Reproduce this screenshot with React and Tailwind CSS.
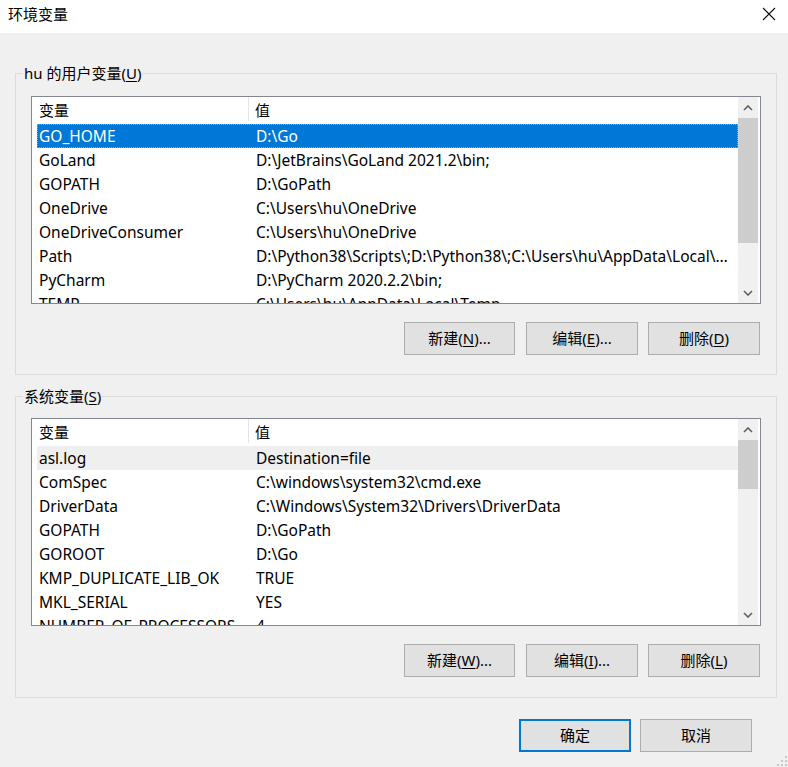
import React from 'react';

const font = { fontFamily: '"Segoe UI", "Noto Sans", "Noto Sans CJK SC", sans-serif' };

const userVars = [
  ['GO_HOME', 'D:\\Go'],
  ['GoLand', 'D:\\JetBrains\\GoLand 2021.2\\bin;'],
  ['GOPATH', 'D:\\GoPath'],
  ['OneDrive', 'C:\\Users\\hu\\OneDrive'],
  ['OneDriveConsumer', 'C:\\Users\\hu\\OneDrive'],
  ['Path', 'D:\\Python38\\Scripts\\;D:\\Python38\\;C:\\Users\\hu\\AppData\\Local\\Programs\\Microsoft VS Code\\bin'],
  ['PyCharm', 'D:\\PyCharm 2020.2.2\\bin;'],
  ['TEMP', 'C:\\Users\\hu\\AppData\\Local\\Temp'],
];

const sysVars = [
  ['asl.log', 'Destination=file'],
  ['ComSpec', 'C:\\windows\\system32\\cmd.exe'],
  ['DriverData', 'C:\\Windows\\System32\\Drivers\\DriverData'],
  ['GOPATH', 'D:\\GoPath'],
  ['GOROOT', 'D:\\Go'],
  ['KMP_DUPLICATE_LIB_OK', 'TRUE'],
  ['MKL_SERIAL', 'YES'],
  ['NUMBER_OF_PROCESSORS', '4'],
];

const Chevron = ({ down }) => (
  <svg width="10" height="6" viewBox="0 0 10 6" className="block">
    <polyline
      points={down ? '1,1 5,5 9,1' : '1,5 5,1 9,5'}
      fill="none"
      stroke="#606060"
      strokeWidth="1.6"
    />
  </svg>
);

const VarList = ({ rows, selected, hovered, thumbTop, thumbHeight }) => (
  <div className="ml-[15px] w-[730px] h-[208px] border border-[#828790] bg-white flex overflow-hidden">
    <div className="flex-1 min-w-0 flex flex-col pl-[5px] overflow-hidden">
      {/* 列见出し */}
      <div className="h-[27px] shrink-0 flex text-[15px] text-black">
        <div className="w-[212px] pl-[2px] pt-[3px] flex items-center border-r border-[#e5e5e5] h-[24px]">变量</div>
        <div className="flex-1 pl-[6px] pt-[3px] flex items-center h-[24px]">值</div>
      </div>
      {rows.map(([name, value], i) => {
        const isSel = i === selected;
        const isHover = i === hovered;
        return (
          <div
            key={name}
            className={`h-[24px] shrink-0 flex items-center pt-[1px] text-[15.5px] ${
              isSel
                ? 'bg-[#0078d7] text-white outline outline-1 outline-dotted outline-[#ff8a2a] -outline-offset-1'
                : isHover
                ? 'bg-[#efefef] text-black'
                : 'text-black'
            }`}
          >
            <div className="w-[212px] pl-[2px] truncate">{name}</div>
            <div className="flex-1 min-w-0 pl-[7px] pr-[6px] truncate">{value}</div>
          </div>
        );
      })}
    </div>
    {/* スクロールバー */}
    <div className="w-[20px] mr-[2px] shrink-0 bg-[#f0f0f0] flex flex-col">
      <div className="h-[21px] shrink-0 flex items-center justify-center">
        <Chevron />
      </div>
      <div className="flex-1 relative">
        <div
          className="absolute left-0 right-0 bg-[#cdcdcd]"
          style={{ top: thumbTop, height: thumbHeight }}
        />
      </div>
      <div className="h-[21px] shrink-0 flex items-center justify-center">
        <Chevron down />
      </div>
    </div>
  </div>
);

const Btn = ({ children, primary, className = '' }) => (
  <button
    className={`w-[111px] h-[33px] bg-[#e1e1e1] text-[15px] text-black flex items-center justify-center ${
      primary ? 'border-2 border-[#0078d7]' : 'border border-[#adadad]'
    } ${className}`}
  >
    {children}
  </button>
);

const U = ({ children }) => <span className="underline underline-offset-2">{children}</span>;

const Group = ({ label, children, className = '' }) => (
  <fieldset className={`ml-[15px] w-[762px] border border-[#dcdcdc] ${className}`}>
    <legend className="ml-[7px] px-[1px] text-[15px] leading-[20px] text-black">{label}</legend>
    {children}
  </fieldset>
);

export default function App() {
  return (
    <div className="w-[788px] h-[767px] bg-[#f0f0f0] flex flex-col relative overflow-hidden" style={font}>
      {/* タイトルバー */}
      <div className="h-[33px] bg-white flex items-center justify-between pl-[8px] pr-[12px]">
        <span className="text-[15px] text-black -mt-[4px]">环境变量</span>
        <svg width="14" height="14" viewBox="0 0 14 14" className="-mt-[5px]">
          <path d="M1 1 L13 13 M13 1 L1 13" stroke="#111" strokeWidth="1.1" />
        </svg>
      </div>

      <Group label={<>hu 的用户变量(<U>U</U>)</>} className="mt-[30px]">
        <div className="mt-[13px]">
          <VarList rows={userVars} selected={0} thumbTop={0} thumbHeight={125} />
        </div>
        <div className="mt-[18px] mb-[19px] flex justify-end pr-[16px]">
          <Btn>新建(<U>N</U>)...</Btn>
          <Btn className="ml-[11px] w-[112px]">编辑(<U>E</U>)...</Btn>
          <Btn className="ml-[10px] w-[112px]">删除(<U>D</U>)</Btn>
        </div>
      </Group>

      <Group label={<>系统变量(<U>S</U>)</>} className="mt-[11px]">
        <div className="mt-[12px]">
          <VarList rows={sysVars} hovered={0} thumbTop={0} thumbHeight={49} />
        </div>
        <div className="mt-[18px] mb-[20px] flex justify-end pr-[16px]">
          <Btn>新建(<U>W</U>)...</Btn>
          <Btn className="ml-[11px] w-[112px]">编辑(<U>I</U>)...</Btn>
          <Btn className="ml-[10px] w-[112px]">删除(<U>L</U>)</Btn>
        </div>
      </Group>

      <div className="mt-[21px] flex justify-end pr-[36px]">
        <Btn primary className="w-[112px]">确定</Btn>
        <Btn className="ml-[9px] w-[112px]">取消</Btn>
      </div>

      {/* サイズ変更グリップ */}
      <svg width="12" height="12" viewBox="0 0 12 12" className="absolute right-0 bottom-0">
        {[[10, 2], [10, 6], [6, 6], [10, 10], [6, 10], [2, 10]].map(([x, y]) => (
          <rect key={`${x}-${y}`} x={x - 1} y={y - 1} width="2" height="2" fill="#c8c8c8" />
        ))}
      </svg>
    </div>
  );
}
